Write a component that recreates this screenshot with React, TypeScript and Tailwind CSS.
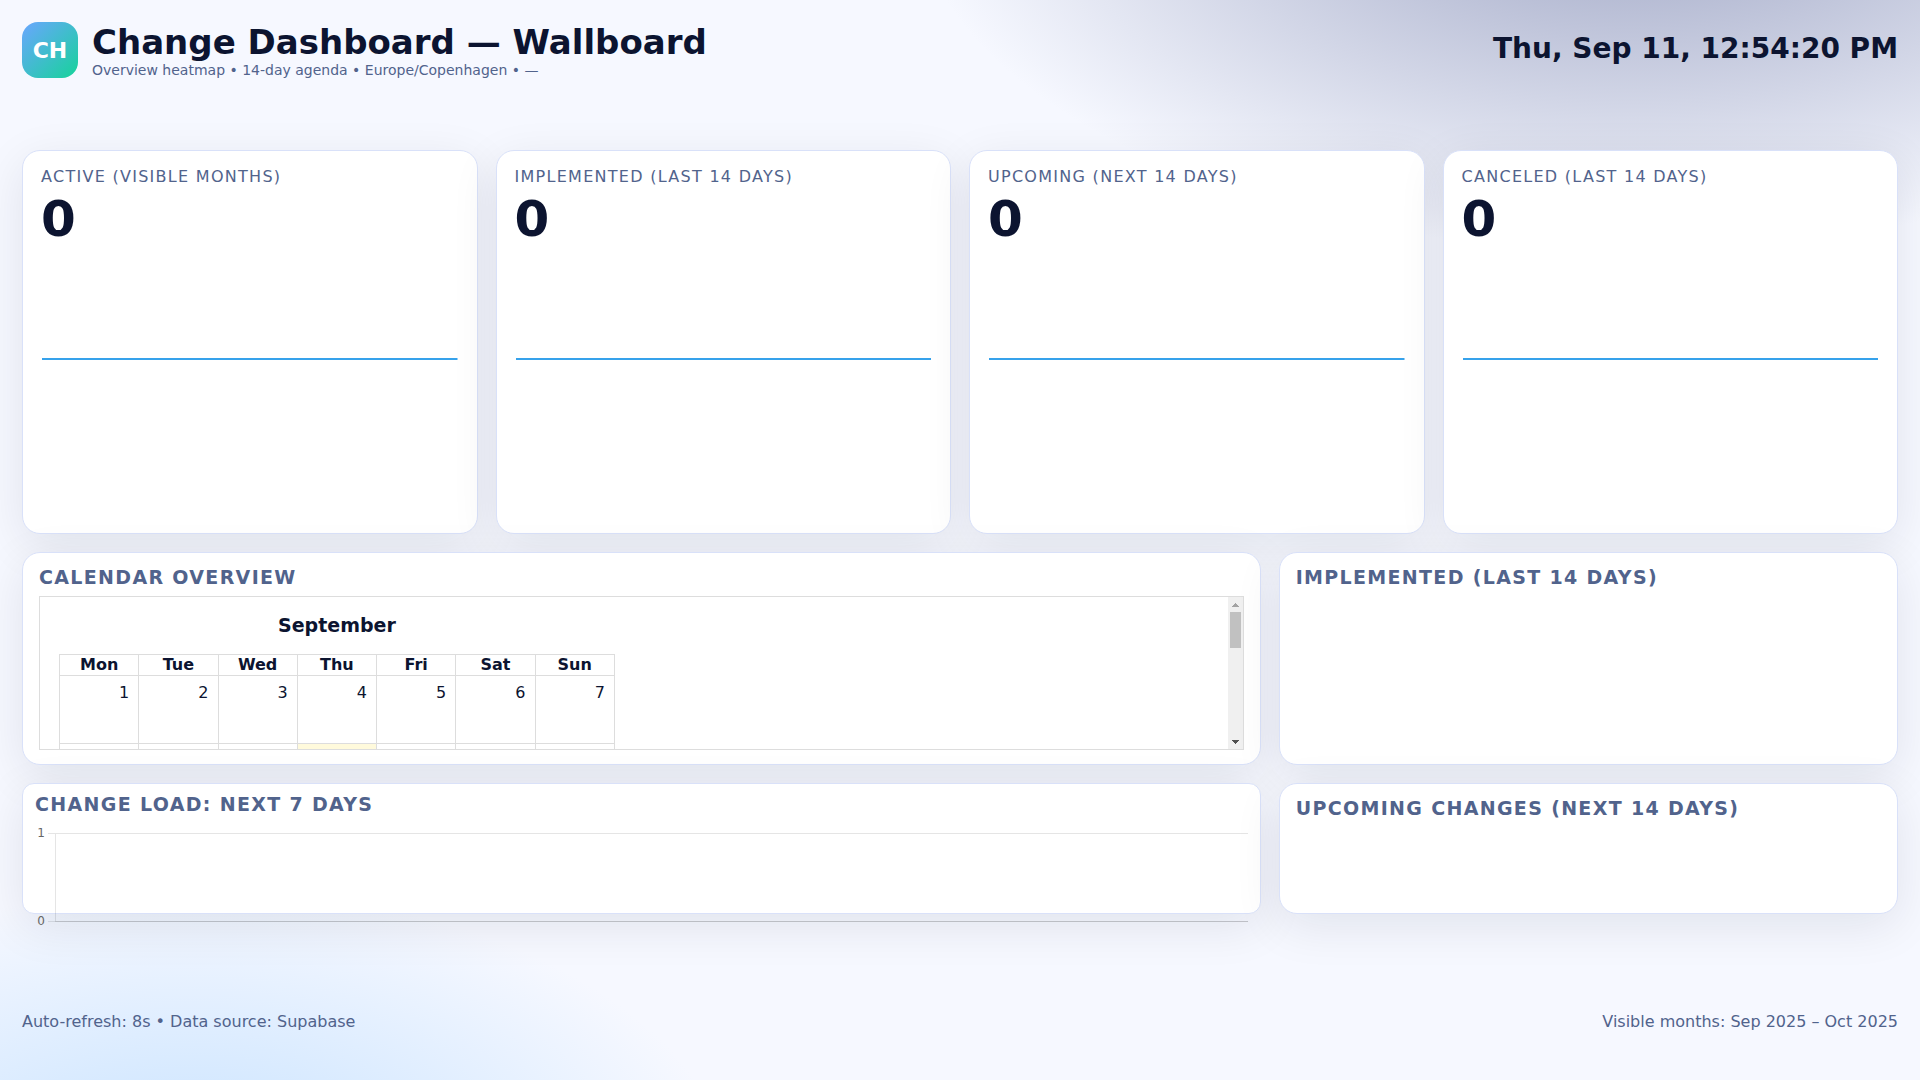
import clsx from "clsx";
import type { ReactNode } from "react";

const kpis = [
  { label: "Active (visible months)", value: 0 },
  { label: "Implemented (last 14 days)", value: 0 },
  { label: "Upcoming (next 14 days)", value: 0 },
  { label: "Canceled (last 14 days)", value: 0 },
];

const weekdays = ["Mon", "Tue", "Wed", "Thu", "Fri", "Sat", "Sun"];
const TODAY = 11;
const DAYS_IN_MONTH = 30;

// September 2025 starts on a Monday, so no leading blanks
const weeks = Array.from({ length: 5 }, (_, w) =>
  Array.from({ length: 7 }, (_, d) => w * 7 + d + 1)
);

function Panel({ title, children }: { title: string; children?: ReactNode }) {
  return (
    <section className="flex min-h-0 min-w-0 flex-col rounded-[18px] border border-[#d9e1f9] bg-white px-4 py-3.5 shadow-[0_12px_48px_rgba(10,20,40,0.09)]">
      <h2 className="text-[19px] leading-5 font-bold tracking-[0.07em] text-[#51638c] uppercase">
        {title}
      </h2>
      {children}
    </section>
  );
}

function KpiCard({ label, value }: { label: string; value: number }) {
  return (
    <section className="flex min-h-0 flex-col rounded-[18px] border border-[#d9e1f9] bg-white p-[18px] shadow-[0_12px_48px_rgba(10,20,40,0.09)]">
      <p className="text-base leading-4 tracking-[0.08em] text-[#51638c] uppercase">
        {label}
      </p>
      <p className="mt-2 text-[50px] leading-[52px] font-bold">{value}</p>
      {/* sparkline, flat while there is no data */}
      <div className="flex h-[228px] items-center px-px">
        <svg className="h-0.5 w-full" role="img" aria-label={label}>
          <rect width="100%" height="2" fill="#36a2eb" />
        </svg>
      </div>
    </section>
  );
}

function ScrollTrack() {
  return (
    <div className="flex w-[15px] shrink-0 flex-col items-center justify-between bg-[#f0f0f0]" aria-hidden="true">
      <div className="flex flex-col items-center">
        <svg width="15" height="15" shapeRendering="crispEdges">
          <path d="M4 10h7v-1h-1v-1h-1v-1h-1v-1h-1v1h-1v1h-1v1h-1z" fill="#a3a3a3" />
        </svg>
        <div className="h-9 w-[11px] bg-[#c1c1c1]" />
      </div>
      <svg width="15" height="15" shapeRendering="crispEdges">
        <path d="M4 6h7v1h-1v1h-1v1h-1v1h-1v-1h-1v-1h-1v-1h-1z" fill="#505050" />
      </svg>
    </div>
  );
}

function Calendar() {
  return (
    <div className="mt-[9px] flex min-h-0 flex-1 border border-[#dddddd]">
      <div className="grid flex-1 grid-cols-2 gap-[38px] overflow-y-auto px-[19px] pt-4 pb-10 [scrollbar-width:none]">
        <div>
          <h3 className="mb-[17px] text-center text-[19px] leading-6 font-bold">
            September
          </h3>
          <table className="w-full table-fixed border-collapse text-base leading-5">
            <thead>
              <tr>
                {weekdays.map((day) => (
                  <th key={day} className="border border-[#dddddd] font-bold">
                    {day}
                  </th>
                ))}
              </tr>
            </thead>
            <tbody>
              {weeks.map((week) => (
                <tr key={week[0]}>
                  {week.map((day) => (
                    <td
                      key={day}
                      className={clsx(
                        "h-[68px] border border-[#dddddd] px-[9px] py-[7px] text-right align-top",
                        day === TODAY && "bg-[#fffadc]"
                      )}
                    >
                      {day <= DAYS_IN_MONTH ? day : ""}
                    </td>
                  ))}
                </tr>
              ))}
            </tbody>
          </table>
        </div>
      </div>
      <ScrollTrack />
    </div>
  );
}

function LoadChart() {
  return (
    <section className="flex min-h-0 min-w-0 flex-col rounded-xl border border-[#d9e1f9] bg-white px-3 pt-2.5 shadow-[0_12px_48px_rgba(10,20,40,0.09)]">
      <h2 className="text-[19px] leading-5 font-bold tracking-[0.07em] text-[#51638c] uppercase">
        Change load: next 7 days
      </h2>
      {/* fixed height, runs past the bottom of the card */}
      <svg
        className="mt-2 h-[112px] w-full shrink-0 overflow-visible text-xs"
        role="img"
        aria-label="Change load"
        shapeRendering="crispEdges"
      >
        <g fill="#666666" textAnchor="end">
          <text x="10" y="15">1</text>
          <text x="10" y="103">0</text>
        </g>
        <g stroke="#000000" strokeOpacity="0.1">
          <line x1="13" y1="11.5" x2="100%" y2="11.5" />
          <line x1="13" y1="99.5" x2="100%" y2="99.5" />
          <line x1="20.5" y1="12" x2="20.5" y2="99" />
        </g>
        <line x1="20" y1="99.5" x2="100%" y2="99.5" stroke="#000000" strokeOpacity="0.1" />
      </svg>
    </section>
  );
}

export default function App() {
  return (
    <div className="flex min-h-screen flex-col bg-[#f6f8ff] bg-[radial-gradient(1200px_600px_at_85%_-10%,#9da4c3,transparent_60%),radial-gradient(900px_500px_at_10%_110%,#c4e1ff,transparent_60%)] p-[22px] font-['DejaVu_Sans',sans-serif] text-[#0c1430]">
      <header className="flex items-center justify-between">
        <div className="flex items-center gap-3.5">
          <div className="flex size-14 items-center justify-center rounded-2xl bg-[linear-gradient(135deg,#6aa6ff,#16d39a)] text-[22px] font-bold text-white">
            CH
          </div>
          <div>
            <h1 className="text-[34px] leading-10 font-bold">
              Change Dashboard — Wallboard
            </h1>
            <p className="text-sm leading-4 text-[#51638c]">
              Overview heatmap • 14-day agenda • Europe/Copenhagen • —
            </p>
          </div>
        </div>
        <time className="pb-0.5 text-[28px] leading-8 font-bold">
          Thu, Sep 11, 12:54:20 PM
        </time>
      </header>

      <main className="mt-18 flex flex-1 flex-col gap-[18px]">
        <div className="grid h-96 grid-cols-4 gap-[18px]">
          {kpis.map((kpi) => (
            <KpiCard key={kpi.label} {...kpi} />
          ))}
        </div>
        <div className="grid h-[213px] grid-cols-[2fr_1fr] gap-[18px]">
          <Panel title="Calendar overview">
            <Calendar />
          </Panel>
          <Panel title="Implemented (last 14 days)" />
        </div>
        <div className="grid h-[131px] grid-cols-[2fr_1fr] gap-[18px]">
          <LoadChart />
          <Panel title="Upcoming changes (next 14 days)" />
        </div>
      </main>

      <footer className="flex justify-between pb-6 text-base text-[#51638c]">
        <p>Auto-refresh: 8s • Data source: Supabase</p>
        <p>Visible months: Sep 2025 – Oct 2025</p>
      </footer>
    </div>
  );
}
